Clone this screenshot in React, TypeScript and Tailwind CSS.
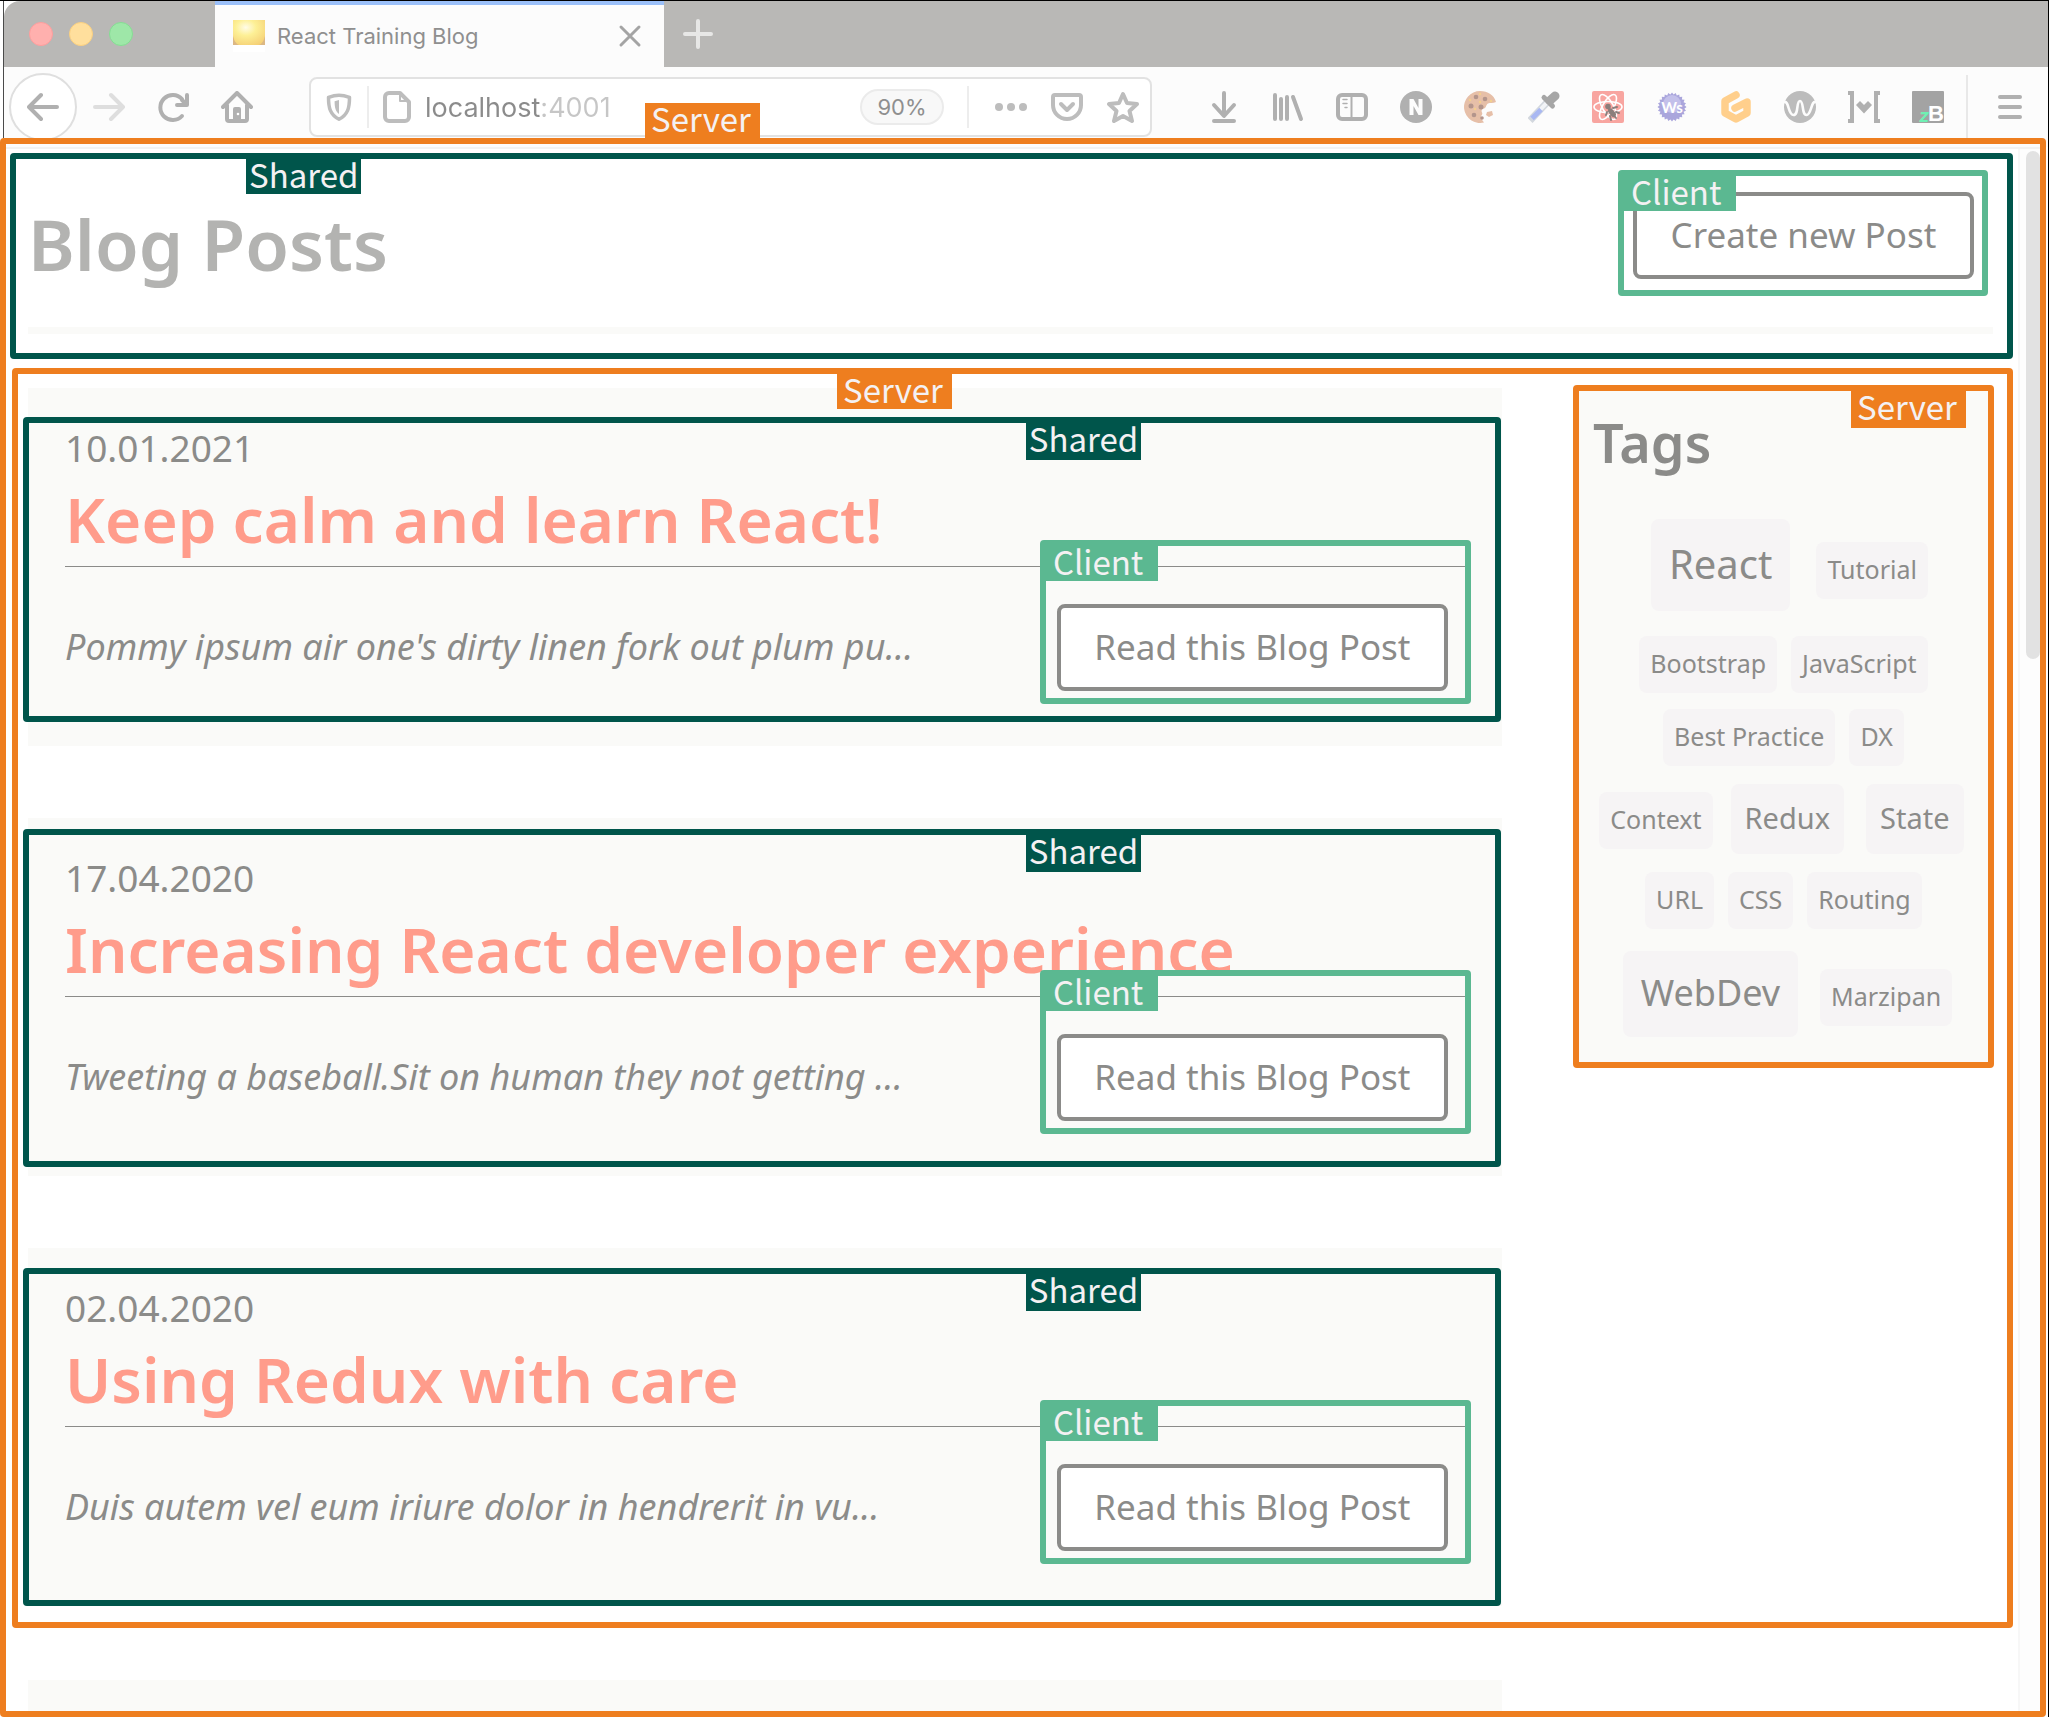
import type { ReactNode } from "react";

type Tone = "server" | "shared" | "client";

const toneBg: Record<Tone, string> = {
  server: "bg-[#ee7e1f]",
  shared: "bg-[#00554b]",
  client: "bg-[#5bb891]",
};

function Label({ tone, className, children }: { tone: Tone; className: string; children: ReactNode }) {
  return (
    <span
      className={`absolute z-20 whitespace-nowrap font-['Noto_Sans_CJK_SC','Noto_Sans',sans-serif] text-[33px] leading-[30px] text-[#f4f1f3] ${toneBg[tone]} ${className}`}
    >
      {children}
    </span>
  );
}

function ClientFrame() {
  return (
    <div className="pointer-events-none absolute -top-16 -right-[23px] -bottom-[13px] -left-[17px] rounded border-[6px] border-[#5bb891]">
      <Label tone="client" className="top-0 left-0 w-28 pb-[5px] pl-[7px]">
        Client
      </Label>
    </div>
  );
}

function Icon({ children, className = "text-[#b0b0b0]", size = "size-8" }: { children: ReactNode; className?: string; size?: string }) {
  return (
    <svg
      viewBox="0 0 32 32"
      className={`${size} shrink-0 ${className}`}
      fill="none"
      stroke="currentColor"
      strokeWidth="4"
      strokeLinecap="round"
      strokeLinejoin="round"
      aria-hidden="true"
    >
      {children}
    </svg>
  );
}

function ToolButton({ label, children }: { label: string; children: ReactNode }) {
  return (
    <button type="button" aria-label={label} className="flex size-8 shrink-0 items-center justify-center">
      {children}
    </button>
  );
}

const gearPoints = Array.from({ length: 48 }, (_, i) => {
  const r = i % 2 ? 12.5 : 14.5;
  const a = (i / 48) * Math.PI * 2;
  return `${(16 + r * Math.cos(a)).toFixed(2)},${(16 + r * Math.sin(a)).toFixed(2)}`;
}).join(" ");

function Extensions() {
  return (
    <div className="ml-14 flex items-center gap-8">
      <ToolButton label="Downloads">
        <Icon>
          <path d="M16 2v22M6 14l10 11 10-11M6 30h20" />
        </Icon>
      </ToolButton>
      <ToolButton label="Library">
        <Icon>
          <path d="M3 4v24M9 8v20M15 6v22M21 6l8 22" />
        </Icon>
      </ToolButton>
      <ToolButton label="Sidebars">
        <Icon>
          <rect x="2" y="4" width="28" height="24" rx="4" />
          <path strokeWidth="2" d="M15.500 4v24" />
          <path strokeWidth="1.500" d="M7 8.500h4M7 12.500h4M9 16.500h2" />
        </Icon>
      </ToolButton>
      <ToolButton label="Notes">
        <Icon>
          <circle cx="16" cy="16" r="16" fill="currentColor" stroke="none" />
          <path fill="#fcfcfc" stroke="none" d="M9.500 8h4l5 9V8h4v16h-4l-5-9v9h-4z" />
        </Icon>
      </ToolButton>
      <ToolButton label="Cookies">
        <Icon>
          <path
            fill="#e6bfa8"
            stroke="none"
            d="M16 0a16 16 0 1 0 4 31.500c-1-2-3-3-3-5s2-3 1-5 0-4 2-4 2-4 4-5 5 0 8-1.500C30 4 24 0 16 0z"
          />
          <g fill="#b3958c" stroke="none">
            <circle cx="12" cy="6" r="2.300" />
            <circle cx="21" cy="8" r="2.300" />
            <circle cx="7" cy="15" r="2.500" />
            <circle cx="17" cy="16" r="2.500" />
            <circle cx="10" cy="24" r="2.300" />
            <circle cx="18" cy="27" r="1.800" />
          </g>
          <g fill="#f3cf8d" stroke="none">
            <circle cx="16" cy="3" r="1.200" />
            <circle cx="6" cy="9" r="1.200" />
            <circle cx="16" cy="11" r="1.200" />
            <circle cx="11" cy="18" r="1.200" />
            <circle cx="27" cy="10" r="1.200" />
          </g>
          <path fill="#e6bfa8" stroke="none" d="M23 21l5-1 1 4-4 2-3-2z" />
        </Icon>
      </ToolButton>
      <ToolButton label="Color picker">
        <Icon>
          <path stroke="#d3d8de" strokeWidth="7" strokeLinecap="butt" d="M2 29.500L19 11.500" />
          <path stroke="#f2f4f7" strokeWidth="4" strokeLinecap="butt" d="M4 27.500L19 11.500" />
          <path stroke="#a9b8f2" strokeWidth="5" strokeLinecap="butt" d="M4 27.500L13 18.500" />
          <path stroke="#a6a6a6" strokeWidth="5" d="M16 6.500l8.500 8.500" />
          <path stroke="#a6a6a6" strokeWidth="9" d="M22 9.500l5-4.500" />
        </Icon>
      </ToolButton>
      <ToolButton label="React developer tools">
        <Icon>
          <rect width="32" height="32" rx="2" fill="#f8a5a0" stroke="none" />
          <g stroke="#fff" strokeWidth="1.600">
            <ellipse cx="16" cy="16" rx="14" ry="5.500" />
            <ellipse cx="16" cy="16" rx="14" ry="5.500" transform="rotate(60 16 16)" />
            <ellipse cx="16" cy="16" rx="14" ry="5.500" transform="rotate(120 16 16)" />
          </g>
          <g stroke="#8b7f7c" strokeWidth="2">
            <circle cx="16" cy="15.500" r="2.800" fill="#8b7f7c" stroke="none" />
            <path strokeWidth="5" d="M18.500 20l3 3.500" />
            <path d="M15 21l-1 3M18 25l1 4M21 17l4-1M24 21l3 1M16 17l8 10" />
          </g>
        </Icon>
      </ToolButton>
      <ToolButton label="Web sockets">
        <Icon>
          <polygon points={gearPoints} fill="#aaa6dc" stroke="none" />
          <circle cx="16" cy="13" r="9" fill="#c3c0ea" stroke="none" />
          <text x="16" y="22" textAnchor="middle" fill="#fff" stroke="none" className="font-[Lato,sans-serif] text-[15px] font-bold">
            Ws
          </text>
        </Icon>
      </ToolButton>
      <ToolButton label="Gitpod">
        <Icon>
          <path stroke="#ffcf8c" strokeWidth="7.500" d="M16 4L5 10v12l11 6 11-6V11l-12 6" />
        </Icon>
      </ToolButton>
      <ToolButton label="Wave">
        <Icon>
          <circle cx="16" cy="16" r="16" fill="#bcbcbc" stroke="none" />
          <path stroke="#fcfcfc" strokeWidth="2.600" d="M0 11C5 9 4 24 9.500 24S12 10 16 10s1.500 14 6.500 14S27 9 32 11" />
        </Icon>
      </ToolButton>
      <ToolButton label="Brackets">
        <Icon>
          <path strokeWidth="4" strokeLinecap="butt" strokeLinejoin="miter" d="M0 2h4v28H0M32 2h-4v28h4" />
          <path fill="currentColor" stroke="none" d="M8 14l4-4 4 4 4-4 4 4-8 8.500z" />
        </Icon>
      </ToolButton>
      <ToolButton label="Zotero">
        <Icon>
          <rect width="32" height="32" rx="1" fill="#a3a3a3" stroke="none" />
          <text x="7" y="31" fill="#6ff0b4" stroke="none" className="font-[Inter,sans-serif] text-[18px] font-bold italic">
            z
          </text>
          <text x="16" y="30" fill="#fff" stroke="none" className="font-['Liberation_Sans',sans-serif] text-[22px] font-bold">
            B
          </text>
        </Icon>
      </ToolButton>
    </div>
  );
}

function TabStrip() {
  return (
    <div className="flex h-[66px] rounded-tl-2xl bg-[#b9b8b6]">
      <div className="flex w-[211px] shrink-0 items-center gap-4 pl-[25px]">
        <button type="button" aria-label="Close window" className="size-6 rounded-full border border-[#ff9d9d] bg-[#ffb0ae]" />
        <button type="button" aria-label="Minimize window" className="size-6 rounded-full border border-[#fbd07f] bg-[#ffdf9d]" />
        <button type="button" aria-label="Zoom window" className="size-6 rounded-full border border-[#85dd93] bg-[#9ee7a8]" />
      </div>
      <div className="flex w-[449px] shrink-0 items-center border-t-4 border-[#9bc0f9] bg-[#fcfcfc] pr-[22px] pl-[18px]">
        <svg viewBox="0 0 32 32" className="size-8 shrink-0" aria-hidden="true">
          <defs>
            <radialGradient id="lamp" cx="0.4" cy="0.3" r="0.8">
              <stop offset="0" stopColor="#fffce8" />
              <stop offset="0.4" stopColor="#fdf096" />
              <stop offset="1" stopColor="#f5cf74" />
            </radialGradient>
          </defs>
          <rect width="32" height="32" fill="#fff" />
          <rect width="32" height="25" fill="url(#lamp)" />
          <path d="M0 16q2 8 6 9H0zM32 16q-2 8-6 9h6z" fill="#dcb884" />
        </svg>
        <span className="ml-3 flex-1 font-[Inter,sans-serif] text-[22px] leading-7 text-[#8f8f8f]">React Training Blog</span>
        <button type="button" aria-label="Close tab">
          <Icon size="size-6" className="text-[#a4a4a4]">
            <path d="M4 4l24 24M28 4L4 28" />
          </Icon>
        </button>
      </div>
      <button type="button" aria-label="New tab" className="ml-[18px]">
        <Icon className="text-[#e7e7e6]">
          <path d="M16 3v26M3 16h26" />
        </Icon>
      </button>
    </div>
  );
}

function Toolbar() {
  return (
    <div className="-mb-[9px] flex h-20 items-center bg-[#fcfcfc] pr-[22px] pl-[5px]">
      <button type="button" aria-label="Back" className="flex size-[68px] shrink-0 items-center justify-center rounded-full border-2 border-[#dfdfdf] bg-white">
        <Icon>
          <path d="M2 16h28M14 4L2 16l12 12" />
        </Icon>
      </button>
      <div className="ml-4 flex items-center gap-8">
        <ToolButton label="Forward">
          <Icon className="text-[#dedede]">
            <path d="M2 16h28M18 4l12 12-12 12" />
          </Icon>
        </ToolButton>
        <ToolButton label="Reload">
          <Icon>
            <path d="M25 25A12.500 12.500 0 1 1 25 8" />
            <path d="M30 4v10H20M25 9l4 4" />
          </Icon>
        </ToolButton>
        <ToolButton label="Home">
          <Icon>
            <path d="M2 16L16 2l14 14M6 14v14a2 2 0 0 0 2 2h16a2 2 0 0 0 2-2V14" />
            <path fill="currentColor" stroke="none" d="M12 30V18a2 2 0 0 1 2-2h4a2 2 0 0 1 2 2v12z" />
            <circle cx="17" cy="23" r="1.300" fill="#fff" stroke="none" />
          </Icon>
        </ToolButton>
      </div>
      <div className="ml-14 flex h-[60px] flex-1 items-center rounded-lg border-2 border-[#e2e2e2] bg-white pr-[11px] pl-3.5">
        <Icon size="size-7" className="text-[#bdbdbd]">
          <path d="M16 2.500c4 0 8 1 12 2.500 0 12-2 20-12 25C6 25 4 17 4 5c4-1.500 8-2.500 12-2.500z" />
          <path fill="currentColor" stroke="none" d="M16 8v16c-4-3-5-7-5-14.500z" />
        </Icon>
        <div className="ml-3.5 h-[42px] w-0.5 bg-[#ededed]" />
        <Icon className="ml-3 text-[#bdbdbd]">
          <path d="M8 2h11l9 9v15a4 4 0 0 1-4 4H8a4 4 0 0 1-4-4V6a4 4 0 0 1 4-4z" />
          <path strokeWidth="2" d="M19 2v8h8" />
        </Icon>
        <input
          type="text"
          aria-label="Address"
          defaultValue="localhost:4001"
          className="ml-3 min-w-0 flex-1 bg-[linear-gradient(90deg,#8b8b8b_116px,#c6c6c6_116px)] bg-clip-text pt-0.5 font-[Inter,sans-serif] text-[27px] leading-9 text-transparent outline-none"
        />
        <button type="button" className="h-9 w-[84px] rounded-full border-2 border-[#ebebeb] bg-[#f8f8f8] font-[Inter,sans-serif] text-[22px] leading-8 text-[#8f8f8f]">
          90%
        </button>
        <div className="ml-[23px] h-[42px] w-0.5 bg-[#ededed]" />
        <div className="ml-[26px] flex items-center gap-6">
          <ToolButton label="Page actions">
            <Icon className="text-[#bdbdbd]">
              <g fill="currentColor" stroke="none">
                <circle cx="4" cy="16" r="4" />
                <circle cx="16" cy="16" r="4" />
                <circle cx="28" cy="16" r="4" />
              </g>
            </Icon>
          </ToolButton>
          <ToolButton label="Save to Pocket">
            <Icon className="text-[#bdbdbd]">
              <path d="M4 4h24a2 2 0 0 1 2 2v8a14 14 0 0 1-28 0V6a2 2 0 0 1 2-2z" />
              <path d="M10 13l6 6 6-6" />
            </Icon>
          </ToolButton>
          <ToolButton label="Bookmark">
            <Icon className="text-[#bdbdbd]">
              <path d="M16 3l4 9 10 1-7.500 7L25 30l-9-5-9 5 2.500-10L2 13l10-1z" />
            </Icon>
          </ToolButton>
        </div>
      </div>
      <Extensions />
      <div className="mt-2 ml-[22px] h-[72px] w-0.5 self-start bg-[#e8e8e8]" />
      <div className="ml-[26px]">
        <ToolButton label="Menu">
          <Icon>
            <path d="M6 6h20M6 16h20M6 26h20" />
          </Icon>
        </ToolButton>
      </div>
    </div>
  );
}

const outlineButton =
  "relative h-[87px] rounded-lg border-4 border-[#8b8b89] bg-white pb-0.5 text-[35px] leading-[48px] whitespace-nowrap text-[#8b8b89]";

type Post = { date: string; title: string; excerpt: string; frame: string };

const posts: Post[] = [
  {
    date: "10.01.2021",
    title: "Keep calm and learn React!",
    excerpt: "Pommy ipsum air one's dirty linen fork out plum pu...",
    frame: "top-[29px] bottom-6",
  },
  {
    date: "17.04.2020",
    title: "Increasing React developer experience",
    excerpt: "Tweeting a baseball.Sit on human they not getting ...",
    frame: "top-[11px] bottom-[9px]",
  },
  {
    date: "02.04.2020",
    title: "Using Redux with care",
    excerpt: "Duis autem vel eum iriure dolor in hendrerit in vu...",
    frame: "top-5 bottom-0",
  },
];

function PostCard({ post }: { post: Post }) {
  return (
    <article className="relative bg-[#fafaf8] px-[37px] pt-9 pb-[55px]">
      <div className={`pointer-events-none absolute right-px -left-[5px] rounded border-[6px] border-[#00554b] ${post.frame}`}>
        <Label tone="shared" className="top-0 left-[68%] w-[115px] pb-[7px] pl-[3px]">
          Shared
        </Label>
      </div>
      <p className="text-[37px] leading-[48px] text-[#8b8b89]">{post.date}</p>
      <h2 className="mt-[11px] border-b border-[#8b8b89] pb-[11px] text-[62px] leading-[72px] font-semibold text-[#ff9c8b]">{post.title}</h2>
      <div className="mt-[37px] mr-[17px] flex items-center justify-between">
        <p className="pb-0.5 text-[36px] leading-[48px] text-[#8b8b89] italic">{post.excerpt}</p>
        <div className="relative">
          <button type="button" className={`${outlineButton} w-[391px]`}>
            Read this Blog Post
          </button>
          <ClientFrame />
        </div>
      </div>
    </article>
  );
}

const tagSizes = {
  sm: "mx-[7px] my-2 px-[11px] pt-[9px] pb-[11px] text-[25px] leading-[37px]",
  md: "mx-[11px] my-2.5 px-3.5 pt-3 pb-3.5 text-[29px] leading-[44px]",
  lg: "mx-[15px] my-3.5 px-[18px] pt-[15px] pb-[17px] text-[36px] leading-[54px]",
  xl: "mx-[19px] my-[17px] px-[18px] pt-[15px] pb-[17px] text-[40px] leading-[60px]",
};

const tagRows: [string, keyof typeof tagSizes][][] = [
  [["React", "xl"], ["Tutorial", "sm"]],
  [["Bootstrap", "sm"], ["JavaScript", "sm"]],
  [["Best Practice", "sm"], ["DX", "sm"]],
  [["Context", "sm"], ["Redux", "md"], ["State", "md"]],
  [["URL", "sm"], ["CSS", "sm"], ["Routing", "sm"]],
  [["WebDev", "lg"], ["Marzipan", "sm"]],
];

function TagCloud() {
  return (
    <aside className="relative -mt-[3px] self-start rounded border-[6px] border-[#ee7e1f] bg-[#fafaf8] pt-5 pb-[11px]">
      <Label tone="server" className="top-0 right-[22px] w-[115px] pb-[7px] pl-1.5">
        Server
      </Label>
      <h2 className="pl-3.5 text-[54px] leading-[62px] font-semibold text-[#8b8b89]">Tags</h2>
      <div className="mt-[29px]">
        {tagRows.map((row, i) => (
          <div key={i} className="flex items-baseline justify-center">
            {row.map(([name, size]) => (
              <a key={name} href="#" className={`rounded-lg bg-[#f6f4f5] whitespace-nowrap text-[#8b8b89] ${tagSizes[size]}`}>
                {name}
              </a>
            ))}
          </div>
        ))}
      </div>
    </aside>
  );
}

function BlogHeader() {
  return (
    <header className="relative mr-[5px] ml-1 mt-1 rounded border-[6px] border-[#00554b] pt-[11px] pr-3.5 pb-[19px] pl-3">
      <Label tone="shared" className="top-0 left-[230px] w-[115px] pb-[5px] pl-[3px]">
        Shared
      </Label>
      <div className="flex items-center justify-between">
        <h1 className="mt-[22px] text-[71px] leading-[84px] font-semibold text-[#b3b3b1]">Blog Posts</h1>
        <div className="relative mr-[5px] rounded border-[6px] border-[#5bb891] pt-4 pr-2 pb-[11px] pl-[9px]">
          <Label tone="client" className="top-0 left-0 w-28 pb-[5px] pl-[7px]">
            Client
          </Label>
          <button type="button" className={`${outlineButton} w-[341px]`}>
            Create new Post
          </button>
        </div>
      </div>
      <div className="mt-[31px] h-[7px] bg-[#fafaf8]" />
    </header>
  );
}

export default function App() {
  return (
    <div className="flex h-screen flex-col overflow-hidden border-t border-r border-black bg-white font-['Noto_Sans',sans-serif]">
      <div className="ml-[3px] border-l border-[#4a4a4a]">
        <TabStrip />
        <Toolbar />
      </div>
      <div className="relative z-10 mr-0.5 flex min-h-0 flex-1 flex-col rounded border-[6px] border-[#ee7e1f] bg-white">
        <Label tone="server" className="bottom-full left-[639px] mb-1.5 w-[115px] pb-[5px] pl-1.5">
          Server
        </Label>
        <div className="h-[5px] shrink-0 border-b-2 border-[#f2f2f2] bg-[#fcfcfc]" />
        <div className="flex min-h-0 flex-1">
          <main className="flex flex-1 flex-col overflow-hidden">
            <BlogHeader />
            <section className="relative mt-[9px] mr-[5px] ml-1.5 grid shrink-0 grid-cols-[7fr_2fr] gap-[71px] rounded border-[6px] border-[#ee7e1f] pt-3.5 pr-[13px] pb-4 pl-2.5">
              <Label tone="server" className="top-0 left-[819px] w-[115px] pb-[5px] pl-1.5">
                Server
              </Label>
              <div className="flex flex-col gap-[72px]">
                {posts.map((post) => (
                  <PostCard key={post.title} post={post} />
                ))}
              </div>
              <TagCloud />
            </section>
            <div className="mt-[52px] mr-6 ml-[22px] grid flex-1 grid-cols-[7fr_2fr] gap-[71px]">
              <div className="bg-[#fafaf8]" />
            </div>
          </main>
          <div className="w-[22px] shrink-0 border-l-2 border-[#f7f7f7] bg-[#fdfdfd] pt-0.5 pl-1.5">
            <div className="h-[508px] rounded-full bg-[#e2e2e2]" />
          </div>
        </div>
      </div>
    </div>
  );
}
